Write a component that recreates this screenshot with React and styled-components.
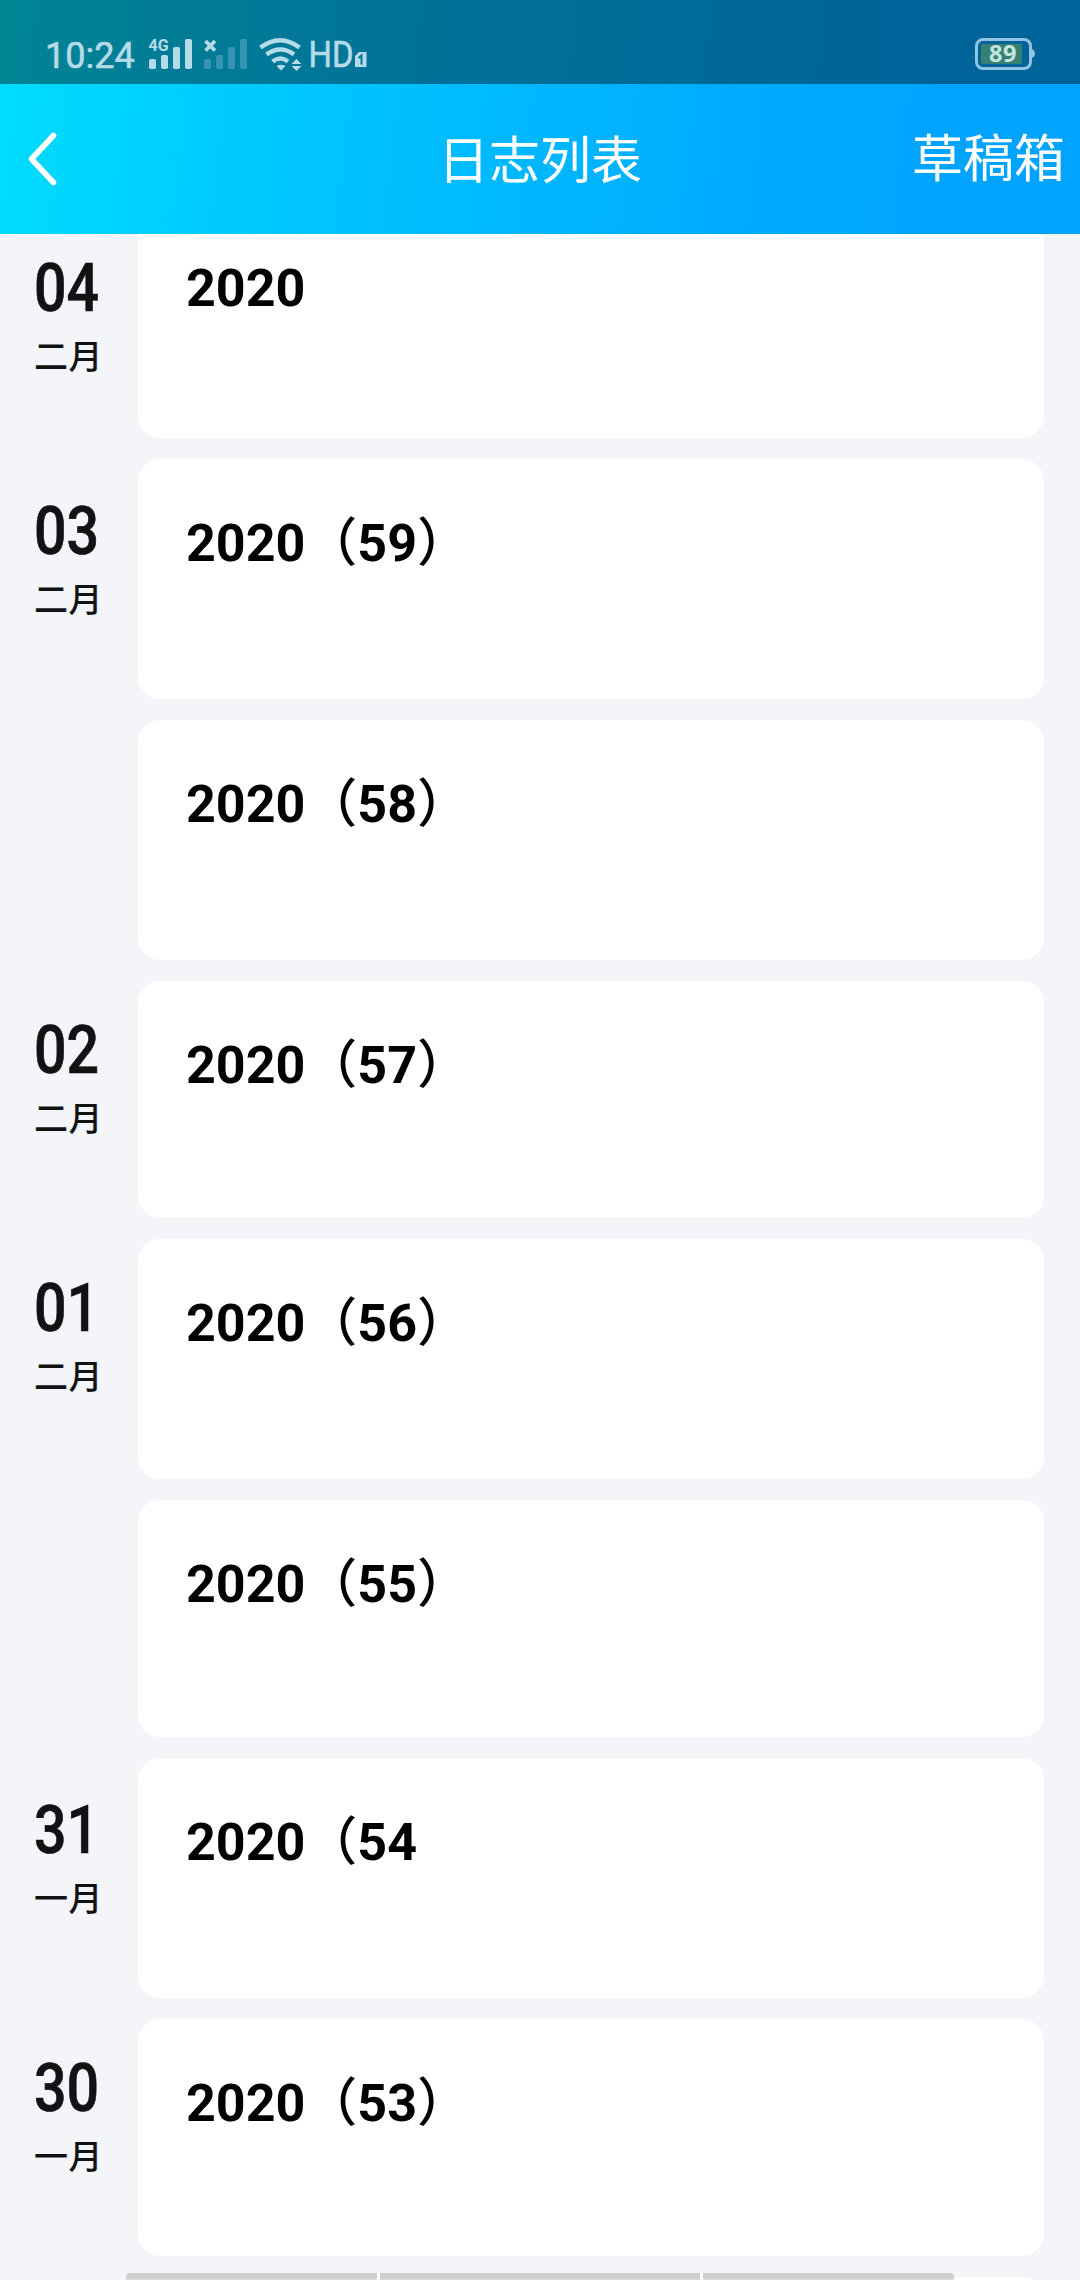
import React from "react";
import styled, { createGlobalStyle } from "styled-components";

const Global = createGlobalStyle`
  * { box-sizing: border-box; }
  html, body { margin: 0; padding: 0; background: #f4f5f9; }
  body { font-family: Roboto, "Noto Sans CJK SC", sans-serif; }
`;

const Screen = styled.div`
  position: relative;
  width: 1080px;
  height: 2280px;
  overflow: hidden;
  display: flex;
  flex-direction: column;
  background: #f4f5f9;
`;

const StatusBar = styled.div`
  height: 84px;
  flex: none;
  padding: 24px 44px 0 46px;
  display: flex;
  justify-content: space-between;
  background: linear-gradient(97deg, #008493 0%, #007598 32%, #006b98 60%, #00649a 86%);
  color: #b5dbe8;
`;

const StatusLeft = styled.div`
  display: flex;
  height: 60px;
`;

const Clock = styled.div`
  width: 102px;
  font-size: 36px;
  line-height: 64px;
  -webkit-text-stroke: 0.6px #b5dbe8;
  text-indent: -1px;
  white-space: nowrap;
`;

const NavBar = styled.div`
  height: 150px;
  flex: none;
  display: grid;
  grid-template-columns: 240px 1fr 240px;
  align-items: center;
  color: #fff;
  font-size: 51px;
  background: linear-gradient(97deg, #00dcff 0%, #00c3ff 31%, #00b0ff 60%, #00a4ff 86%);
`;

const Back = styled.div`
  padding-left: 24px;
  display: flex;
`;

const Title = styled.div`
  text-align: center;
  line-height: 72px;
  padding-top: 6px;
`;

const Drafts = styled.div`
  text-align: right;
  padding-right: 15px;
  line-height: 72px;
  padding-top: 1px;
`;

const List = styled.div`
  flex: 1;
  overflow: hidden;
  display: flex;
  flex-direction: column;
  gap: 21px;
`;

const Row = styled.div`
  flex: none;
  height: ${(p) => p.$h}px;
  margin-top: ${(p) => (p.$cut ? `-${p.$cut}px` : 0)};
  display: flex;
`;

const DateCol = styled.div`
  width: 138px;
  padding: ${(p) => p.$top}px 0 0 34px;
  color: #101214;
`;

const Day = styled.div`
  height: 70px;
  line-height: 71px;
  font-size: 67px;
  font-weight: 500;
  -webkit-text-stroke: 0.7px #101214;
  transform: scaleX(0.855);
  transform-origin: 0 50%;
  white-space: nowrap;
`;

const Month = styled.div`
  font-size: 34px;
  line-height: 50px;
  margin-top: 9px;
  font-weight: 500;
  letter-spacing: 0.5px;
`;

const Card = styled.div`
  width: 906px;
  border-radius: 22px;
  background: #fff;
  padding: 54px 0 0 48px;
  color: #000;
  font-size: 52px;
  font-weight: 700;
  line-height: 62px;
  white-space: nowrap;
`;

const Paren = styled.span`
  font-family: "Noto Sans CJK SC", sans-serif;
  font-weight: 500;
  line-height: 1;
`;

const Ad = styled.div`
  position: absolute;
  left: 126px;
  bottom: 0;
  height: 7px;
  width: 828px;
  display: grid;
  grid-template-columns: 251px 320px 251px;
  gap: 3px;
  background: #fff;
  border-radius: 4px 4px 0 0;
  overflow: hidden;
`;

const Segment = styled.div`
  background: linear-gradient(#cfcfcf 0 5px, #d8d8d8 5px);
`;

const entries = [
  { day: "04", month: "二月", h: 234, cut: 30, top: 49 },
  { day: "03", month: "二月", n: "59", close: true, h: 240, top: 37 },
  { n: "58", close: true, h: 240 },
  { day: "02", month: "二月", n: "57", close: true, h: 237, top: 34 },
  { day: "01", month: "二月", n: "56", close: true, h: 240, top: 34 },
  { n: "55", close: true, h: 237 },
  { day: "31", month: "一月", n: "54", h: 240, top: 37 },
  { day: "30", month: "一月", n: "53", close: true, h: 237, top: 34 },
];

function StatusIcons() {
  return (
    <svg width="225" height="60" viewBox="148 24 225 60" fill="#b5dbe8">
      <text x="148.5" y="51" fontSize="16.5" fontWeight="700" fontFamily="Roboto" textLength="20" lengthAdjust="spacingAndGlyphs">4G</text>
      <rect x="149" y="59" width="7" height="10" rx="1.8" />
      <rect x="161" y="55" width="7" height="14" rx="1.8" />
      <rect x="173" y="47" width="7" height="22" rx="1.8" />
      <rect x="185" y="39" width="7" height="30" rx="1.8" />
      <path d="M205.500 41l9.500 9.500M215 41l-9.500 9.500" stroke="#b5dbe8" strokeWidth="3.8" />
      <g fill="#3592b1">
        <rect x="204" y="59" width="7" height="10" rx="1.8" />
        <rect x="216" y="55" width="7" height="14" rx="1.8" />
        <rect x="228" y="47" width="7" height="22" rx="1.8" />
        <rect x="240" y="39" width="7" height="30" rx="1.8" />
      </g>
      <g fill="none" stroke="#b5dbe8" strokeWidth="4.6">
        <path d="M260.500 47.500Q280 33 299.500 47.500" />
        <path d="M266.500 54.500Q280.500 44.500 294 54.500" />
        <path d="M272.500 61.500Q280.500 55.500 288 61.500" />
      </g>
      <path d="M276.500 66Q281 63.500 285.500 66L281 70.500Z" />
      <path d="M291.500 64L296.500 59L301.500 64ZM291.500 66L296.500 71L301.500 66Z" />
      <text x="308.500" y="67" fontSize="36" fontFamily="Roboto" stroke="#b5dbe8" strokeWidth="0.600" textLength="45" lengthAdjust="spacingAndGlyphs">HD</text>
      <path d="M359 52H366.500V67H355V56Z" />
      <path d="M358.500 58L361.500 55.500V64.500" fill="none" stroke="#00759a" strokeWidth="2" />
    </svg>
  );
}

function Battery() {
  return (
    <svg width="62" height="60" viewBox="974 24 62 60">
      <rect x="976.500" y="39.500" width="54" height="29" rx="6.500" fill="none" stroke="#90c4e3" strokeWidth="3" />
      <path d="M1032 49q3 1.500 3 4.500t-3 4.500z" fill="#90c4e3" />
      <rect x="981" y="44" width="41" height="20" rx="1.500" fill="#378075" />
      <text x="989" y="62" fontSize="23.500" fontWeight="700" fontFamily="Noto Sans" fill="#c5e4dd" textLength="27.500">89</text>
    </svg>
  );
}

export default function App() {
  return (
    <Screen>
      <Global />
      <StatusBar>
        <StatusLeft>
          <Clock>10:24</Clock>
          <StatusIcons />
        </StatusLeft>
        <Battery />
      </StatusBar>
      <NavBar>
        <Back>
          <svg width="40" height="60" viewBox="24 128 40 60" fill="none" stroke="#fff" strokeWidth="5.600" strokeLinecap="round" strokeLinejoin="round">
            <path d="M53.500 134.500L31.500 158L53.500 181.500" />
          </svg>
        </Back>
        <Title>日志列表</Title>
        <Drafts>草稿箱</Drafts>
      </NavBar>
      <List>
        {entries.map((e, i) => (
          <Row key={i} $h={e.h} $cut={e.cut}>
            <DateCol $top={e.top || 0}>
              {e.day && (
                <>
                  <Day>{e.day}</Day>
                  <Month>{e.month}</Month>
                </>
              )}
            </DateCol>
            <Card>
              2020
              {e.n && <Paren>（</Paren>}
              {e.n}
              {e.close && <Paren>）</Paren>}
            </Card>
          </Row>
        ))}
        <Row $h={237}>
          <DateCol $top={0} />
          <Card />
        </Row>
      </List>
      <Ad>
        <Segment />
        <Segment />
        <Segment />
      </Ad>
    </Screen>
  );
}
